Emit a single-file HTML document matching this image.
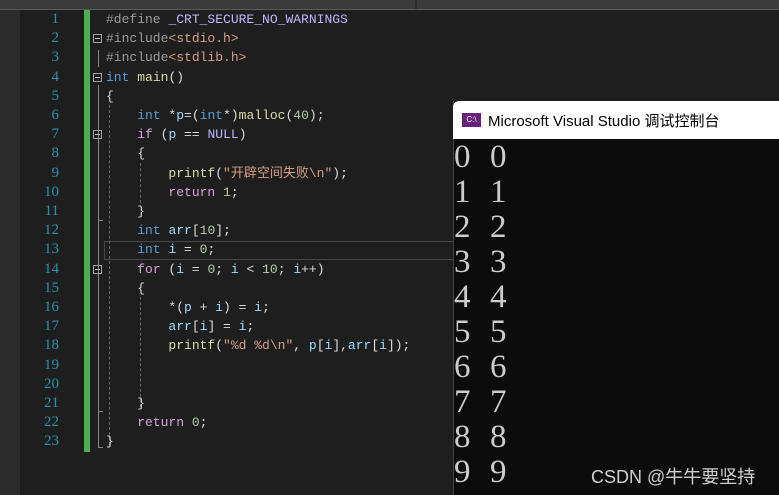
<!DOCTYPE html><html><head><meta charset="utf-8"><style>
body{margin:0;width:779px;height:495px;overflow:hidden;background:#1e1e1e;position:relative;font-family:"Liberation Mono","Noto Sans CJK SC",monospace}
.ln{position:absolute;left:28px;width:31px;text-align:right;color:#2b91af;font-size:15px;font-family:"Liberation Serif",serif}
.c{position:absolute;left:106px;font-size:13px;color:#dcdcdc;white-space:pre;line-height:19px}
.k{color:#569cd6}.f{color:#dcdcaa}.v{color:#9cdcfe}.n{color:#b5cea8}.s{color:#d69d85}.p{color:#9b9b9b}.m{color:#beb7ff}.r{color:#d8a0df}
.fold{position:absolute;left:93px;width:9px;height:9px;border:1px solid #a0a0a0;box-sizing:border-box}
.fold:after{content:"";position:absolute;left:1px;right:1px;top:3px;height:1px;background:#c0c0c0}
.d{position:absolute;font-family:"Liberation Serif",serif;font-size:33px;color:#cccccc;line-height:35px}
</style></head><body>
<div style="position:absolute;left:0;top:0;width:20px;height:495px;background:#2b2b2b"></div>
<div style="position:absolute;left:0;top:0;width:779px;height:9px;background:#3a3a3a;border-bottom:1px solid #5a5a5a"></div>
<div style="position:absolute;left:415px;top:0;width:2px;height:9px;background:#2a2a2a"></div>
<div style="position:absolute;left:84px;top:10px;width:6px;height:442px;background:#4caf50"></div>
<div style="position:absolute;left:104px;top:241px;width:350px;height:17px;border:1px solid #464646"></div>
<div style="position:absolute;left:98px;top:50px;width:1px;height:17px;background:#888"></div>
<div style="position:absolute;left:98px;top:85px;width:1px;height:362px;background:#888"></div>
<div style="position:absolute;left:98px;top:447px;width:5px;height:1px;background:#888"></div>
<div style="position:absolute;left:98px;top:411px;width:5px;height:1px;background:#888"></div>
<div style="position:absolute;left:98px;top:220px;width:5px;height:1px;background:#888"></div>
<div style="position:absolute;left:109px;top:105px;width:0;height:340px;border-left:1px dashed #666"></div>
<div style="position:absolute;left:140px;top:163px;width:0;height:40px;border-left:1px dashed #666"></div>
<div style="position:absolute;left:140px;top:297px;width:0;height:110px;border-left:1px dashed #666"></div>
<div class="fold" style="top:34px"></div><div class="fold" style="top:73px"></div><div class="fold" style="top:130px"></div><div class="fold" style="top:265px"></div>
<div class="ln" style="top:11px">1</div><div class="ln" style="top:30px">2</div><div class="ln" style="top:49px">3</div><div class="ln" style="top:69px">4</div><div class="ln" style="top:88px">5</div><div class="ln" style="top:107px">6</div><div class="ln" style="top:126px">7</div><div class="ln" style="top:145px">8</div><div class="ln" style="top:165px">9</div><div class="ln" style="top:184px">10</div><div class="ln" style="top:203px">11</div><div class="ln" style="top:222px">12</div><div class="ln" style="top:241px">13</div><div class="ln" style="top:261px">14</div><div class="ln" style="top:280px">15</div><div class="ln" style="top:299px">16</div><div class="ln" style="top:318px">17</div><div class="ln" style="top:337px">18</div><div class="ln" style="top:357px">19</div><div class="ln" style="top:376px">20</div><div class="ln" style="top:395px">21</div><div class="ln" style="top:414px">22</div><div class="ln" style="top:433px">23</div>
<div class="c" style="top:10px;line-height:19.2px"><span class="p">#define</span> <span class="m">_CRT_SECURE_NO_WARNINGS</span>
<span class="p">#include</span><span class="s">&lt;stdio.h&gt;</span>
<span class="p">#include</span><span class="s">&lt;stdlib.h&gt;</span>
<span class="k">int</span> <span class="f">main</span>()
{
    <span class="k">int</span> *<span class="v">p</span>=(<span class="k">int</span>*)<span class="f">malloc</span>(<span class="n">40</span>);
    <span class="r">if</span> (<span class="v">p</span> == <span class="m">NULL</span>)
    {
        <span class="f">printf</span>(<span class="s">"开辟空间失败\n"</span>);
        <span class="r">return</span> <span class="n">1</span>;
    }
    <span class="k">int</span> <span class="v">arr</span>[<span class="n">10</span>];
    <span class="k">int</span> <span class="v">i</span> = <span class="n">0</span>;
    <span class="r">for</span> (<span class="v">i</span> = <span class="n">0</span>; <span class="v">i</span> &lt; <span class="n">10</span>; <span class="v">i</span>++)
    {
        *(<span class="v">p</span> + <span class="v">i</span>) = <span class="v">i</span>;
        <span class="v">arr</span>[<span class="v">i</span>] = <span class="v">i</span>;
        <span class="f">printf</span>(<span class="s">"%d %d\n"</span>, <span class="v">p</span>[<span class="v">i</span>],<span class="v">arr</span>[<span class="v">i</span>]);


    }
    <span class="r">return</span> <span class="n">0</span>;
}</div>
<div style="position:absolute;left:453px;top:101px;width:326px;height:394px;background:#0c0c0c;border-left:1px solid #444"></div>
<div style="position:absolute;left:453px;top:101px;width:326px;height:38px;background:#fff;border-radius:6px 0 0 0"></div>
<div style="position:absolute;left:462px;top:113px;width:19px;height:14px;background:#68217a;color:#fff;font-size:8px;line-height:14px;text-align:center;font-family:'Liberation Sans'">C:\</div>
<div style="position:absolute;left:488px;top:110px;font-family:'Liberation Sans','Noto Sans CJK SC',sans-serif;font-size:15px;color:#000">Microsoft Visual Studio 调试控制台</div>
<div class="d" style="left:454px;top:140px">0<br>1<br>2<br>3<br>4<br>5<br>6<br>7<br>8<br>9</div>
<div class="d" style="left:490px;top:140px">0<br>1<br>2<br>3<br>4<br>5<br>6<br>7<br>8<br>9</div>
<div style="position:absolute;left:591px;top:463px;font-family:'Liberation Sans','Noto Sans CJK SC',sans-serif;font-size:18px;color:#cfcfcf">CSDN @牛牛要坚持</div>
</body></html>
